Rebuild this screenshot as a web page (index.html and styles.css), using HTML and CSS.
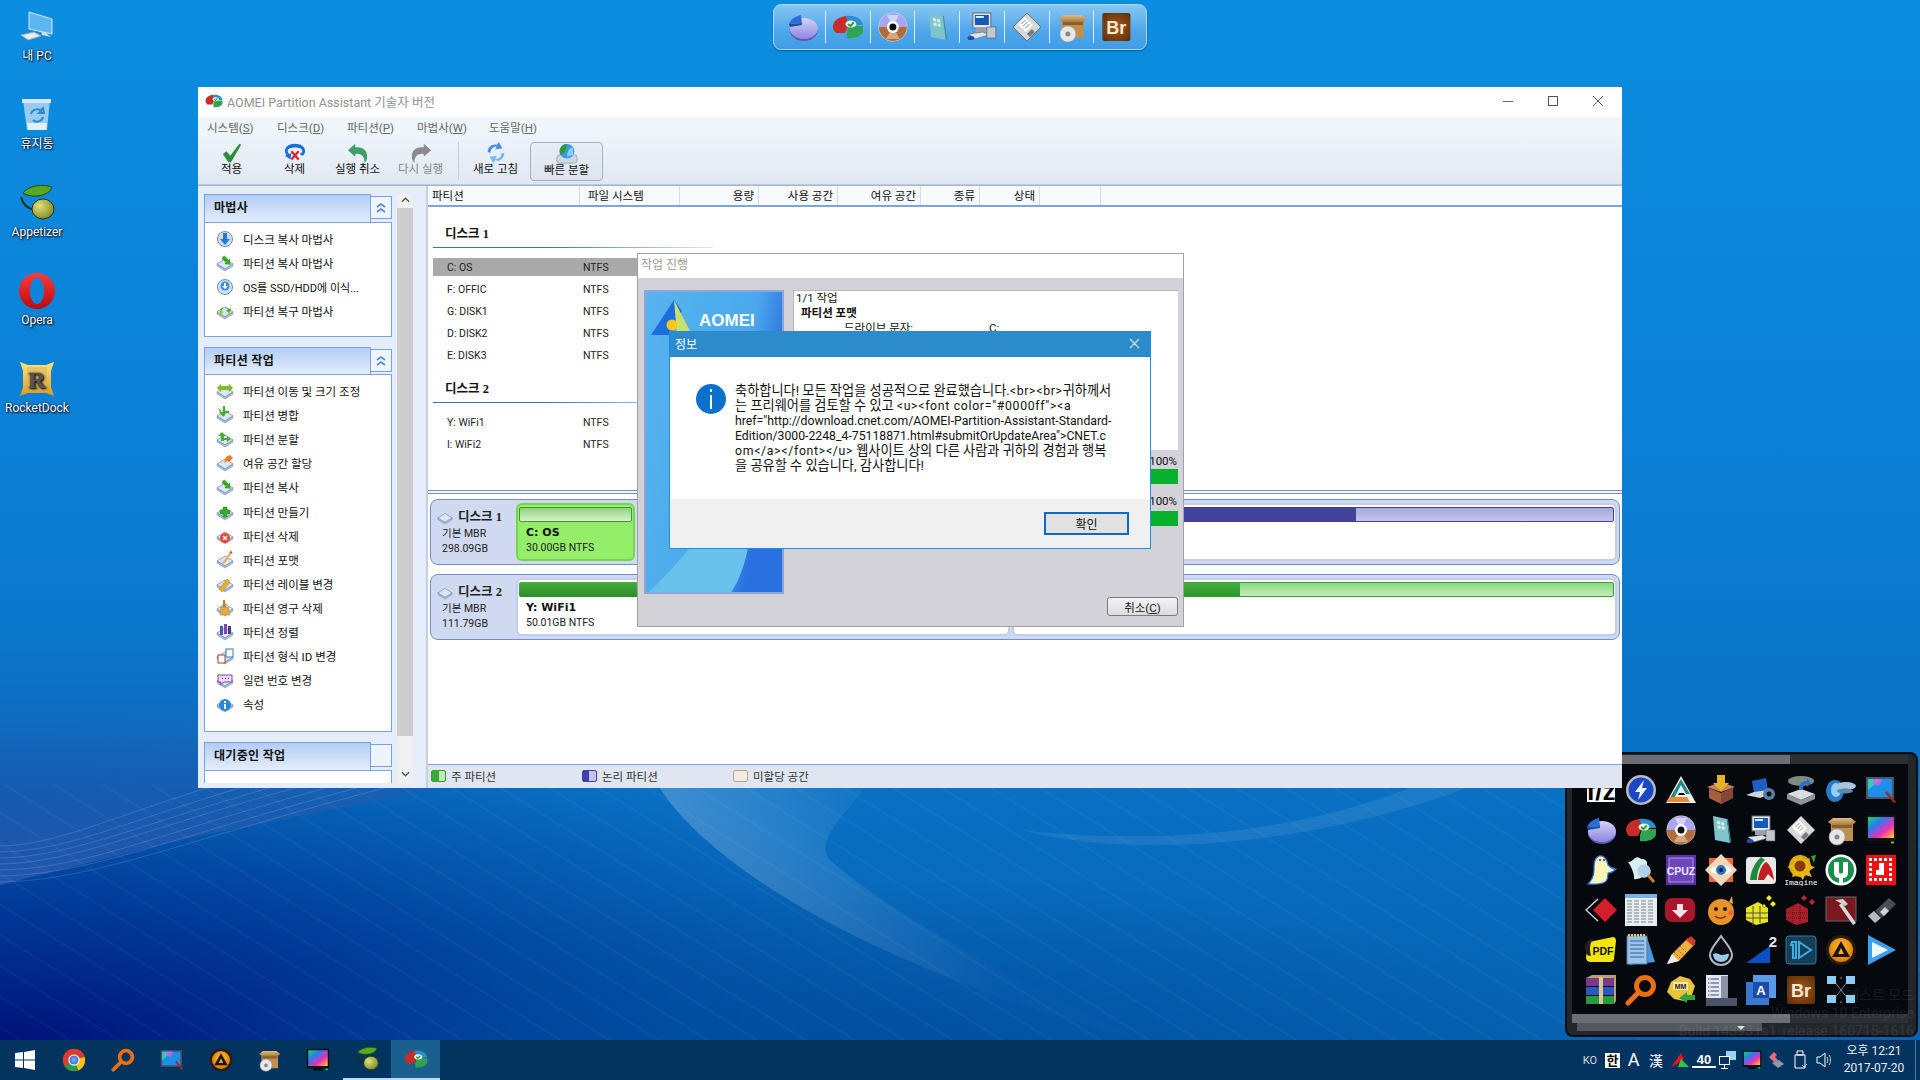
FILE: index.html
```html
<!DOCTYPE html>
<html lang="ko">
<head>
<meta charset="utf-8">
<title>AOMEI Partition Assistant</title>
<link rel="stylesheet" href="styles.css">
</head>
<body>
<svg class="sprites" width="0" height="0" aria-hidden="true">
<defs>
<linearGradient id="gPie" x1="0" y1="0" x2="0" y2="1"><stop offset="0" stop-color="#d6d3fa"/><stop offset="1" stop-color="#8a86e0"/></linearGradient>
<linearGradient id="gBoxT" x1="0" y1="0" x2="0" y2="1"><stop offset="0" stop-color="#e0bd84"/><stop offset="1" stop-color="#a97a3e"/></linearGradient>
<radialGradient id="gBr" cx=".5" cy=".5" r=".7"><stop offset="0" stop-color="#a5591a"/><stop offset="1" stop-color="#5b2d08"/></radialGradient>
<radialGradient id="gAimp" cx=".5" cy=".4" r=".6"><stop offset="0" stop-color="#ffc23a"/><stop offset="1" stop-color="#d97a00"/></radialGradient>
<linearGradient id="gMon" x1="0" y1="0" x2="1" y2="1"><stop offset="0" stop-color="#19d36b"/><stop offset=".33" stop-color="#2a7cf0"/><stop offset=".66" stop-color="#f02fb0"/><stop offset="1" stop-color="#ffd21c"/></linearGradient>
<radialGradient id="gOlive" cx=".35" cy=".35" r=".8"><stop offset="0" stop-color="#e0e07a"/><stop offset="1" stop-color="#75801c"/></radialGradient>
<linearGradient id="gOpera" x1="0" y1="0" x2="0" y2="1"><stop offset="0" stop-color="#ff3a3a"/><stop offset="1" stop-color="#b60b14"/></linearGradient>
<linearGradient id="gRd" x1="0" y1="0" x2="0" y2="1"><stop offset="0" stop-color="#ffe480"/><stop offset="1" stop-color="#d99a1e"/></linearGradient>
<radialGradient id="gChrome" cx=".5" cy=".5" r=".5"><stop offset="0" stop-color="#7db7f0"/><stop offset="1" stop-color="#2a74d0"/></radialGradient>

<symbol id="pie" viewBox="0 0 32 32"><ellipse cx="17" cy="19" rx="14" ry="11" fill="#5c58b5"/><ellipse cx="17" cy="17.500" rx="14" ry="10.500" fill="url(#gPie)"/><path d="M2 13C4 8 9 5 14 4l1 8z" fill="#2b6fd6"/><path d="M2 13l13-1v2L3 16z" fill="#1c4fa0"/></symbol>
<symbol id="pa" viewBox="0 0 32 32"><path d="M1 15C2 9 7 6 14 5l3 9-4 8H4C2 20 1 18 1 15z" fill="#c62c28"/><path d="M14 5c8-1 16 2 17 9H17z" fill="#2a8fd0"/><path d="M17 15h14v6c-2 5-9 7-16 6v-6z" fill="#2ea452"/><ellipse cx="19" cy="13" rx="5.500" ry="3.500" fill="#e9f7e4"/><path d="M16 13l2.500 2 3.500-3.500" fill="none" stroke="#2c9a30" stroke-width="1.800"/></symbol>
<symbol id="cd" viewBox="0 0 32 32"><circle cx="16" cy="16" r="14.500" fill="#ddd"/><path d="M2 16a14 14 0 0 1 28 0z" fill="#a8a6f0"/><path d="M2 16a14 14 0 0 0 28 0z" fill="#b06c3a"/><path d="M10 4l6 12 6-12z" fill="#e6e6ff" opacity=".7"/><path d="M9 28l7-12 7 12z" fill="#e6c0a0" opacity=".7"/><circle cx="16" cy="16" r="6" fill="#fff"/><circle cx="16" cy="16" r="3.500" fill="#0c1016"/></symbol>
<symbol id="book" viewBox="0 0 32 32"><path d="M8 2l14 3 3 24-15-3z" fill="#7ec4ca"/><path d="M22 5l3 24 1-1-3-23z" fill="#3e8a94"/><path d="M12 7l3 .6.3 3-3-.5zm4 .8l3 .6.3 3-3-.5zM12.500 11.500l3 .5.300 3-3-.5zm4 .8l3 .5.300 3-3-.5z" fill="#d6f0f2"/></symbol>
<symbol id="pcset" viewBox="0 0 32 32"><rect x="7" y="2" width="18" height="15" fill="#e4e8f0" stroke="#667"/><rect x="9" y="4" width="14" height="10" fill="#1a58b8"/><rect x="10" y="5" width="8" height="2" fill="#bfe"/><rect x="10" y="17" width="12" height="4" fill="#9aa0ac"/><path d="M3 23l14-2 6 3-14 4z" fill="#dfe2e8" stroke="#667" stroke-width=".6"/><rect x="21" y="16" width="9" height="11" fill="#c3c7d0" stroke="#556" stroke-width=".6"/><ellipse cx="5" cy="27" rx="3.500" ry="2" fill="#1b4fae"/></symbol>
<symbol id="floppy" viewBox="0 0 32 32"><path d="M16 2l14 14-14 14L2 16z" fill="#d8d8d8" stroke="#6e6e6e"/><path d="M14 6l8 8-7 7-8-8z" fill="#fff"/><path d="M10.500 13l4-4m-2 6l4-4m-2 6l4-4" stroke="#8a8a8a"/><path d="M21 18l3 3-5 5-3-3z" fill="#7a7a7a"/></symbol>
<symbol id="box" viewBox="0 0 32 32"><rect x="6" y="9" width="22" height="18" fill="#c08e4e"/><path d="M3 8l5-4h18l5 4-4 3H7z" fill="url(#gBoxT)"/><path d="M7 11h20v3H7z" fill="#8a5f2c"/><circle cx="12" cy="23" r="8" fill="#e7e7e7" stroke="#9a9a9a" stroke-width=".6"/><circle cx="12" cy="23" r="2.500" fill="#888"/></symbol>
<symbol id="br" viewBox="0 0 32 32"><rect x="2" y="2" width="28" height="28" rx="2" fill="url(#gBr)"/><text x="16" y="23" text-anchor="middle" font-family="Liberation Sans" font-weight="700" font-size="18" fill="#f4e8d8">Br</text></symbol>
<symbol id="fz" viewBox="0 0 32 32"><rect x="2" y="4" width="28" height="24" fill="#fff"/><text x="16" y="26" text-anchor="middle" font-family="Liberation Sans" font-weight="700" font-size="26" fill="#000">f/z</text></symbol>
<symbol id="bolt" viewBox="0 0 32 32"><circle cx="16" cy="16" r="15" fill="#b7bcc4"/><circle cx="16" cy="16" r="12.500" fill="#1c48c8"/><path d="M19 6l-9 12h5l-2 8 9-12h-5z" fill="#f2f6ff"/></symbol>
<symbol id="tri" viewBox="0 0 32 32"><path d="M16 2l15 27H1z" fill="#eee"/><path d="M16 5L5 24h4l7-13 5 9h4z" fill="#1d8a8a"/><path d="M2 28l3-5h17l3 5z" fill="#e98a30"/><path d="M14 19h5l1 2h-7z" fill="#05080d"/></symbol>
<symbol id="boxdl" viewBox="0 0 32 32"><path d="M2 13l14-5 14 5-14 5z" fill="#c8845a"/><path d="M4 14l12 5 12-5v10l-12 6-12-6z" fill="#a55f40"/><path d="M16 19v11l12-6V14z" fill="#824831"/><path d="M12 1h8v8h4l-8 8-8-8h4z" fill="#e6b422"/></symbol>
<symbol id="lapgear" viewBox="0 0 32 32"><path d="M7 7l14-3 2 12-14 3z" fill="#1f5fc4"/><path d="M1 21l8-3 14-2 5 3-13 5z" fill="#d0d4da"/><circle cx="24" cy="20" r="6" fill="#5d7ea6"/><circle cx="24" cy="20" r="2.500" fill="#05080d"/></symbol>
<symbol id="hddarrow" viewBox="0 0 32 32"><ellipse cx="16" cy="7" rx="13" ry="5" fill="#7d8c80"/><path d="M2 20l14-5 14 5-14 6z" fill="#d9dde2"/><path d="M2 20v5l14 6 14-6v-5l-14 6z" fill="#8d929b"/><path d="M14 16c0-6 2-9 8-9V4l4 5-4 4v-3c-3 0-4 2-4 6z" fill="#2a71c4"/></symbol>
<symbol id="wing" viewBox="0 0 32 32"><ellipse cx="10" cy="17" rx="9" ry="11" fill="#2a7ac8"/><ellipse cx="11" cy="16" rx="5" ry="7" fill="#8fd0f4"/><ellipse cx="21" cy="12" rx="10" ry="4" fill="#a8c4dc"/><ellipse cx="20" cy="17" rx="8" ry="2.500" fill="#5d87ad"/></symbol>
<symbol id="paint" viewBox="0 0 32 32"><rect x="1" y="3" width="28" height="22" fill="#4a5566"/><rect x="3" y="5" width="24" height="18" fill="#1c8fe8"/><path d="M3 5h13L3 16z" fill="#2ed0c0"/><path d="M8 5h10l-4 7-6-2z" fill="#d060e8" opacity=".8"/><path d="M22 17l9 11-2 1-9-10z" fill="#a52c20"/></symbol>
<symbol id="colormon" viewBox="0 0 32 32"><rect x="1" y="1" width="30" height="26" fill="#111"/><rect x="3" y="3" width="26" height="21" fill="url(#gMon)"/><rect x="10" y="27" width="12" height="3" fill="#0a0a0a"/><rect x="26" y="27.500" width="3" height="2" fill="#2fdc3e"/></symbol>
<symbol id="ghost" viewBox="0 0 32 32"><path d="M14 2c6-1 8 4 9 9 2 2 5 4 8 4-3 3-6 4-8 4 0 4-1 8-3 9-5 3-12 2-17 2 3-3 6-8 6-14S9 4 14 2z" fill="#fbf4b8" stroke="#2a6fe0" stroke-width="1.200"/><circle cx="15" cy="6" r="1" fill="#335"/><circle cx="19" cy="6" r="1" fill="#335"/></symbol>
<symbol id="ghostfind" viewBox="0 0 32 32"><path d="M3 8c3 0 5-2 7-4 3-2 5 1 7 1 2 0 5 1 5 4 0 3 1 8-1 11s-9 6-12 5c1-4-3-13-6-17z" fill="#d8f0f4"/><circle cx="19" cy="17" r="6" fill="#a8d4f0" stroke="#c9ccd6" stroke-width="1.600"/><path d="M23 21l6 7" stroke="#c28434" stroke-width="3"/></symbol>
<symbol id="cpuz" viewBox="0 0 32 32"><rect x="1" y="1" width="30" height="30" fill="#5a30a8"/><rect x="4" y="4" width="24" height="24" fill="#6e46bc" stroke="#a890dc"/><text x="16" y="21" text-anchor="middle" font-family="Liberation Sans" font-weight="700" font-size="10.500" fill="#e8e8f8">CPUZ</text></symbol>
<symbol id="eye" viewBox="0 0 32 32"><rect x="4" y="4" width="24" height="24" fill="#e8693e"/><path d="M16 0l16 16-16 16L0 16z" fill="#f0d8b8"/><path d="M5 16c4-6 18-6 22 0-4 6-18 6-22 0z" fill="#fff"/><circle cx="16" cy="16" r="5" fill="#2a70c0"/><circle cx="16" cy="16" r="2" fill="#0c1c40"/></symbol>
<symbol id="fsc" viewBox="0 0 32 32"><rect x="1" y="3" width="30" height="27" rx="4" fill="#e8e8e8"/><path d="M5 26C6 14 12 7 16 3l4 3c-5 4-8 12-8 20z" fill="#1f8a3c"/><path d="M13 26c1-8 4-16 8-18 4 2 7 9 8 18l-6-6-4 6z" fill="#c22020"/></symbol>
<symbol id="imagine" viewBox="0 0 32 32"><circle cx="15" cy="12" r="11" fill="#d8a810"/><path d="M15 0l3 7 7-3-2 7 7 2-6 4 3 6-7-2-2 5-4-5-7 2 2-7-7-3 7-3-1-7 6 3z" fill="#e8b810"/><circle cx="15" cy="12" r="5.500" fill="#8a3a10"/><path d="M26 2l5-1-2 8z" fill="#3aa030"/><text x="16" y="31" text-anchor="middle" font-family="Liberation Mono" font-size="8" fill="#fff">Imagine</text></symbol>
<symbol id="utor" viewBox="0 0 32 32"><circle cx="16" cy="16" r="15.500" fill="#fff"/><circle cx="16" cy="16" r="13" fill="#17904c"/><path d="M9 8h5v10c0 2 4 2 4 0V8h5v11c0 4-3 5-5 5v5h-4v-5c-3 0-5-2-5-5z" fill="#fff"/></symbol>
<symbol id="redgrid" viewBox="0 0 32 32"><rect x="1" y="1" width="30" height="30" fill="#f01010"/><path d="M4 4h3v3H4zm5 0h3v3H9zm5 0h3v3h-3zm5 0h3v3h-3zm5 0h3v3h-3zM4 9h3v3H4zm20 0h3v3h-3zM4 14h3v3H4zm10-5h5v12h-8v-5h3zm10 5h3v3h-3zM4 19h3v3H4zm20 0h3v3h-3zM4 24h3v3H4zm5 0h3v3H9zm5 0h3v3h-3zm5 0h3v3h-3zm5 0h3v3h-3z" fill="#fff"/></symbol>
<symbol id="diamond" viewBox="0 0 32 32"><path d="M13 5L1 16l12 11" fill="none" stroke="#ccc" stroke-width="1.500"/><path d="M20 4l12 12-12 12L8 16z" fill="#d21f2c"/></symbol>
<symbol id="sheet" viewBox="0 0 32 32"><rect width="32" height="32" fill="#e6eef2"/><rect width="32" height="4" fill="#7ab0e0"/><path d="M2 7h28M2 10h28M2 13h28M2 16h28M2 19h28M2 22h28M2 25h28M2 28h28" stroke="#6e7680" stroke-width=".9" stroke-dasharray="5 2"/></symbol>
<symbol id="reddl" viewBox="0 0 32 32"><rect y="4" width="30" height="24" rx="7" fill="#a8152c"/><path d="M12 10h6v6h5l-8 8-8-8h5z" fill="#f4e4e4"/></symbol>
<symbol id="face" viewBox="0 0 32 32"><circle cx="16" cy="18" r="13" fill="#e8932a"/><path d="M24 8l3-6 1 8z" fill="#e8b040"/><circle cx="11" cy="15" r="2" fill="#2a1808"/><circle cx="20" cy="15" r="2" fill="#2a1808"/><path d="M10 22c3 3 8 3 11 0" stroke="#7a3000" fill="none" stroke-width="1.500"/><circle cx="26" cy="19" r="2.500" fill="#f06040"/></symbol>
<symbol id="cubes" viewBox="0 0 32 32"><path d="M1 14l12-6 10 6v14l-12 3-10-5z" fill="#e8e420"/><path d="M1 19h22M1 24h22M8 12v19M15 12v17" stroke="#555" stroke-width="1"/><path d="M24 1l3 3-3 3-3-3zm4 6l3 3-3 3-3-3zm-9 3l2 2-2 2-2-2z" fill="#f4e818" stroke="#555" stroke-width=".5"/></symbol>
<symbol id="redcubes" viewBox="0 0 32 32"><path d="M1 15l12-6 10 6v13l-12 3-10-5z" fill="#a82028"/><path d="M1 19h22M1 24h22M8 12v19M15 12v17" stroke="#55101a" stroke-width="1" stroke-dasharray="1 1"/><path d="M19 1l3 3-3 3-3-3zm8 4l3 3-3 3-3-3z" fill="#b82830"/></symbol>
<symbol id="hammer" viewBox="0 0 32 32"><rect x="1" y="3" width="30" height="24" fill="#7a1820" stroke="#666"/><path d="M10 6l8-1 5 5-3 2-3-2z" fill="#d0d0d0"/><path d="M14 11l3-2 14 20-3 2z" fill="#d8d8d8"/></symbol>
<symbol id="usbk" viewBox="0 0 32 32"><path d="M10 17L24 4l7 6-14 14z" fill="#4a4e54"/><path d="M15 18l5-5 4 4-5 5z" fill="#d0d4d8"/><path d="M3 22l6-5 7 7-6 5z" fill="#b8bcc2"/></symbol>
<symbol id="pdf" viewBox="0 0 32 32"><path d="M4 8l24-5c2 0 3 2 3 4l-2 18c0 2-2 3-4 3l-20 0c-3 0-4-3-4-5z" fill="#f4e40a"/><path d="M0 14C0 8 4 5 9 4 5 8 4 14 6 22c-4 0-6-3-6-8z" fill="#222"/><text x="18" y="21" text-anchor="middle" font-family="Liberation Sans" font-weight="700" font-size="10.500" fill="#111">PDF</text></symbol>
<symbol id="note" viewBox="0 0 32 32"><path d="M3 3h19l8 25-26 3z" fill="#4a94e0"/><rect x="2" y="2" width="20" height="28" fill="#9cc4e8" stroke="#5577a8"/><path d="M5 7h14M5 11h14M5 15h14M5 19h14M5 23h14" stroke="#3a5a9a"/><path d="M3 1h18" stroke="#e8d060" stroke-width="3" stroke-dasharray="2 1"/></symbol>
<symbol id="pencil" viewBox="0 0 32 32"><path d="M2 30l5-10L23 4l7 6-16 17z" fill="#f0b040"/><path d="M7 20l7 7-12 3z" fill="#eee"/><path d="M21 6l7 6 3-5-5-5z" fill="#d03a30"/><path d="M9 18l7 7M12 15l7 7M15 12l7 7" stroke="#a06c20" stroke-dasharray="2 1.500"/></symbol>
<symbol id="drop" viewBox="0 0 32 32"><path d="M16 2c6 9 11 13 11 19a11 10 0 0 1-22 0c0-6 5-10 11-19z" fill="#0a0e14" stroke="#b0b8bc" stroke-width="2"/><path d="M8 20c4-2 6 1 9 1s5-2 7-1c0 5-4 8-8 8s-8-3-8-8z" fill="#9cc8ec"/></symbol>
<symbol id="wedge" viewBox="0 0 32 32"><path d="M1 29L25 12v17z" fill="#0a50c0"/><text x="28" y="13" text-anchor="middle" font-family="Liberation Sans" font-weight="700" font-size="15" fill="#e8e8e8">2</text></symbol>
<symbol id="oned" viewBox="0 0 32 32"><rect x="1" y="2" width="30" height="28" rx="3" fill="#163c58" stroke="#2a7ca8"/><path d="M7 8h4v16H8V11H6zM14 8l12 8-12 8z" fill="none" stroke="#3ab0e0" stroke-width="2"/></symbol>
<symbol id="aimp" viewBox="0 0 32 32"><circle cx="16" cy="16" r="15" fill="#2a1c08"/><circle cx="16" cy="16" r="12" fill="url(#gAimp)"/><path d="M16 7l9 16H7zm0 7l-3 6h6z" fill="#1c1408" fill-rule="evenodd"/></symbol>
<symbol id="play" viewBox="0 0 32 32"><path d="M3 1l28 15L3 31z" fill="#3ca0f0"/><path d="M7 8l16 8-16 8z" fill="#eef6ff"/></symbol>
<symbol id="rar" viewBox="0 0 32 32"><rect x="1" y="4" width="28" height="8" fill="#7a3a8c"/><rect x="1" y="13" width="28" height="8" fill="#2a58c0"/><rect x="1" y="22" width="28" height="8" fill="#2a9a40"/><path d="M1 4l6-3h24l-2 3zM29 4l2-3v26l-2 3z" fill="#b8a070"/><rect x="14" y="3" width="4" height="27" fill="#d8c890"/></symbol>
<symbol id="search" viewBox="0 0 32 32"><circle cx="20" cy="12" r="8.500" fill="none" stroke="#e96f10" stroke-width="5"/><path d="M13 19L3 29" stroke="#e96f10" stroke-width="5" stroke-linecap="round"/></symbol>
<symbol id="mm" viewBox="0 0 32 32"><path d="M6 8l9-6 10 3 5 7-3 9-8 6-10-2-7-7z" fill="#e8c43c"/><rect x="8" y="8" width="15" height="8" fill="#f8e8a0"/><text x="15.500" y="15" text-anchor="middle" font-family="Liberation Sans" font-weight="700" font-size="7" fill="#222">MM</text><path d="M14 24l8-6v3h8v5h-8v3z" fill="#2ea440"/></symbol>
<symbol id="doclist" viewBox="0 0 32 32"><rect x="1" y="1" width="22" height="26" fill="#e4e8f0"/><rect x="16" y="2" width="7" height="25" fill="#8a92a4"/><path d="M3 5h11M3 9h11M3 13h11M3 17h11M3 21h11" stroke="#3a4a70" stroke-dasharray="1.500 1 8 0"/><rect x="1" y="24" width="31" height="8" fill="#4c5468"/></symbol>
<symbol id="ablue" viewBox="0 0 32 32"><rect x="1" y="8" width="23" height="23" fill="#3a78d0"/><rect x="8" y="1" width="23" height="23" fill="#5a98e8"/><rect x="8" y="8" width="16" height="16" fill="#1c4ca8"/><text x="16" y="21" text-anchor="middle" font-family="Liberation Sans" font-weight="700" font-size="13" fill="#fff">A</text></symbol>
<symbol id="netsq" viewBox="0 0 32 32"><path d="M9 7l14 18M23 7L9 25M16 3v2M16 27v2" stroke="#9ab" stroke-width=".8"/><path d="M2 2h9v8H2zm19 0h9v8h-9zM2 21h9v8H2zm19 0h9v8h-9z" fill="#8ccdf6"/></symbol>

<symbol id="monitor" viewBox="0 0 36 36"><path d="M10 3l23 7v15L10 20z" fill="#5cb6f0" stroke="#dfe6ec"/><path d="M22 22l5 2 5 4-9-2z" fill="#d8dde2"/><path d="M2 26l13-3 7 4-13 4z" fill="#e8ecf0" stroke="#9aa"/></symbol>
<symbol id="bin" viewBox="0 0 36 36"><path d="M4 3l27-1-3 31H8z" fill="#9fd0f0" opacity=".95"/><path d="M3 2l29 0 0 4-29 0z" fill="#d6e9f6"/><path d="M8 26h20l-1 7H9z" fill="#e4eef5"/><path d="M12 17a6 6 0 0 1 10-3l-2 2 5 0-1-5-2 2M24 20a6 6 0 0 1-10 3" fill="none" stroke="#2a88d0" stroke-width="2"/></symbol>
<symbol id="olive" viewBox="0 0 36 36"><path d="M4 8C10 0 24-1 33 2 30 11 14 14 4 8z" fill="#5aa81e" stroke="#1f4a10"/><path d="M2 12c2 8 8 12 14 13" fill="none" stroke="#24300c" stroke-width="2"/><ellipse cx="24" cy="24" rx="11" ry="10" fill="url(#gOlive)" stroke="#2a300c"/></symbol>
<symbol id="opera" viewBox="0 0 36 36"><path d="M18 0c10 0 18 8 18 18s-8 18-18 18S0 28 0 18 8 0 18 0zm0 5c-4 0-7 6-7 13s3 13 7 13 7-6 7-13-3-13-7-13z" fill="url(#gOpera)" fill-rule="evenodd"/></symbol>
<symbol id="rocket" viewBox="0 0 36 36"><path d="M1 1l8 3h18l8-3-3 9v16l3 9-8-3H9l-8 3 3-9V10z" fill="url(#gRd)"/><rect x="8" y="6" width="20" height="24" fill="#c8ab5c" opacity=".4"/><text x="18" y="27" text-anchor="middle" font-family="Liberation Serif" font-weight="700" font-size="24" fill="#555">R</text></symbol>
<symbol id="chrome" viewBox="0 0 32 32"><circle cx="16" cy="16" r="15" fill="#df3a30"/><path d="M3 24l13-8 13 6a15 15 0 0 1-13 9c-6 0-10-3-13-7z" fill="#2b9a48"/><path d="M16 16l14-4a15 15 0 0 1-8 18z" fill="#fbc512"/><circle cx="16" cy="16" r="7.500" fill="#fff"/><circle cx="16" cy="16" r="6" fill="url(#gChrome)"/></symbol>

<symbol id="hd" viewBox="0 0 18 18"><path d="M1 10l8-5 8 5-8 5z" fill="#dce6f5" stroke="#7690b4" stroke-width=".8"/><path d="M1 10v2l8 5 8-5v-2l-8 5z" fill="#a9b9d2" stroke="#7690b4" stroke-width=".5"/></symbol>
<symbol id="i-diskcopy" viewBox="0 0 18 18"><circle cx="9" cy="9" r="7.500" fill="#cfe0f4" stroke="#6f8cb4"/><path d="M7 3h4v6h3l-5 6-5-6h3z" fill="#2a78d4"/></symbol>
<symbol id="i-copy" viewBox="0 0 18 18"><use href="#hd"/><path d="M6 3h6v-2l5 4-5 4V7H6z" fill="#39a62a" transform="rotate(45 9 5)"/></symbol>
<symbol id="i-os" viewBox="0 0 18 18"><circle cx="9" cy="9" r="7.500" fill="#cfe0f4" stroke="#6f8cb4"/><circle cx="9" cy="8" r="4.500" fill="#3d8ae0"/><path d="M8 5h2v3h2l-3 3-3-3h2z" fill="#fff"/></symbol>
<symbol id="i-rec" viewBox="0 0 18 18"><use href="#hd"/><path d="M4 9a5 4 0 0 1 9-2l2-1-1 5-4-2 2-1a3 3 0 0 0-6 1z" fill="#3fa82e"/><path d="M14 9a5 4 0 0 1-9 3l-2 1 1-5 4 2-2 1a3 3 0 0 0 6-1z" fill="#a0d030"/></symbol>
<symbol id="i-move" viewBox="0 0 18 18"><use href="#hd"/><path d="M1 6l4-4v2h8V2l4 4-4 4V8H5v2z" fill="#6bbf3a" stroke="#d8c020" stroke-width=".5"/></symbol>
<symbol id="i-merge" viewBox="0 0 18 18"><use href="#hd"/><path d="M7 0h2v5h4v2H9v3l-3-3 1-2zM2 2l4 3-2 1z" fill="#49ab30"/><path d="M7 11l-4-5h8z" fill="#49ab30"/></symbol>
<symbol id="i-split" viewBox="0 0 18 18"><use href="#hd"/><path d="M6 2l4 4H8v5H5V6H2z" fill="#49ab30"/><path d="M8 8h3V6l4 3-4 3v-2H8z" fill="#49ab30"/></symbol>
<symbol id="i-alloc" viewBox="0 0 18 18"><use href="#hd"/><path d="M10 3l4-2 3 3-4 4-2-1-3 2z" fill="#f07a20"/></symbol>
<symbol id="i-create" viewBox="0 0 18 18"><use href="#hd"/><path d="M7 4h4v3h3v4h-3v3H7v-3H4V7h3z" fill="#3ca82c" stroke="#2a7a20" stroke-width=".4"/></symbol>
<symbol id="i-del" viewBox="0 0 18 18"><use href="#hd"/><circle cx="9" cy="11" r="5" fill="#e84a30"/><path d="M7 9l4 4m0-4l-4 4" stroke="#fff" stroke-width="1.400"/></symbol>
<symbol id="i-fmt" viewBox="0 0 18 18"><use href="#hd"/><path d="M7 11l7-10 2 1-7 10-3 1z" fill="#e6b060"/><path d="M13.500 1.500l2.500 1 .5-1.500-2-1z" fill="#d03a30"/></symbol>
<symbol id="i-label" viewBox="0 0 18 18"><use href="#hd"/><path d="M3 14L11 4l3 3-8 10z" fill="#e8b028" stroke="#a07810" stroke-width=".5"/></symbol>
<symbol id="i-wipe" viewBox="0 0 18 18"><use href="#hd"/><path d="M7 1h2l1 7H7z" fill="#c0802c"/><path d="M5 8h7l2 8H4z" fill="#e8a840" stroke="#a06c18" stroke-width=".4"/></symbol>
<symbol id="i-align" viewBox="0 0 18 18"><use href="#hd"/><path d="M4 3h3v9H4z" fill="#4a58b0"/><path d="M8 1h3v10H8z" fill="#7a4ab0"/><path d="M12 3h3v8h-3z" fill="#4a3a90"/></symbol>
<symbol id="i-type" viewBox="0 0 18 18"><use href="#hd"/><rect x="2" y="8" width="7" height="8" fill="#fff" stroke="#a84020"/><rect x="10" y="2" width="7" height="8" fill="#fff" stroke="#2a78d0"/></symbol>
<symbol id="i-serial" viewBox="0 0 18 18"><use href="#hd"/><path d="M2 4h14v7H8l-4 3 1-3H2z" fill="#e8d8f4" stroke="#7a4ab0"/><path d="M6 7.500h1m2 0h1m2 0h1" stroke="#555"/></symbol>
<symbol id="i-info" viewBox="0 0 18 18"><use href="#hd"/><circle cx="9" cy="10" r="6" fill="#2a88dc"/><rect x="8" y="9" width="2" height="5" fill="#fff"/><rect x="8" y="6" width="2" height="2" fill="#fff"/></symbol>

<symbol id="t-apply" viewBox="0 0 24 24"><path d="M2 13l4-3 4 5L20 2l2 1-11 19H8z" fill="#2f8f3e"/></symbol>
<symbol id="t-del" viewBox="0 0 24 24"><path d="M1 10c0-5 5-8 11-8s11 3 11 8c0 2-1 4-3 5l-3-2c2-1 3-2 3-3 0-3-4-4-8-4s-8 1-8 4c0 1 1 2 2 3l2-1-1 7-6-4 2-1c-1-1-2-2-2-4z" fill="#1c6ce0"/><path d="M8 10l8 9m0-9l-8 9" stroke="#e02020" stroke-width="2.400"/></symbol>
<symbol id="t-undo" viewBox="0 0 24 24"><path d="M1 9l8-7v4c8-1 13 3 13 10 0 3-1 5-3 7 1-6-3-11-10-10v3z" fill="#3fa067"/></symbol>
<symbol id="t-redo" viewBox="0 0 24 24"><path d="M23 9l-8-7v4C7 5 2 9 2 16c0 3 1 5 3 7-1-6 3-11 10-10v3z" fill="#8a8a8a"/></symbol>
<symbol id="t-ref" viewBox="0 0 24 24"><path d="M3 11C3 5 8 2 13 3l2-3 4 7-8 1 2-3c-3 0-7 2-7 7z" fill="#4a8fe0"/><path d="M21 12c0 6-5 10-10 8l-2 3-4-7 8-1-2 3c4 1 7-2 7-6z" fill="#7fb4ec"/></symbol>
<symbol id="t-quick" viewBox="0 0 24 24"><rect x="1" y="13" width="22" height="9" rx="3" fill="#d0d8e4" stroke="#98a4b8"/><circle cx="12" cy="9" r="8" fill="#3a9ae8"/><path d="M12 1a8 8 0 0 0-7 12c4-1 6-5 7-12z" fill="#2e9a3a"/><path d="M18 4l1 9-7 2c0-5 2-9 6-11z" fill="#8ad0f0"/></symbol>
<symbol id="chev" viewBox="0 0 12 12"><path d="M2 5l4-3 4 3M2 10l4-3 4 3" fill="none" stroke="#5588cc" stroke-width="1.600"/></symbol>
</defs>
</svg>

<main class="desktop">
<svg class="wallpaper" viewBox="0 0 1920 1080" preserveAspectRatio="none" aria-hidden="true">
<defs>
<linearGradient id="wpBase" x1="0" y1="0" x2="0" y2="1"><stop offset="0" stop-color="#0c8ee0"/><stop offset=".4" stop-color="#0b80d6"/><stop offset=".7" stop-color="#0a72c6"/><stop offset="1" stop-color="#0560ae"/></linearGradient>
<radialGradient id="wpDark" gradientUnits="userSpaceOnUse" cx="0" cy="1050" r="1000" gradientTransform="matrix(1 0 0 .34 0 693)"><stop offset="0" stop-color="#000f78"/><stop offset=".5" stop-color="#003a98" stop-opacity=".85"/><stop offset="1" stop-color="#004a9e" stop-opacity="0"/></radialGradient>
<radialGradient id="wpMid" gradientUnits="userSpaceOnUse" cx="900" cy="1060" r="700" gradientTransform="matrix(1 0 0 .26 0 784)"><stop offset="0" stop-color="#004a9c" stop-opacity=".8"/><stop offset="1" stop-color="#004a9c" stop-opacity="0"/></radialGradient>
<linearGradient id="wpSheet" gradientUnits="userSpaceOnUse" x1="680" y1="880" x2="880" y2="770"><stop offset="0" stop-color="#fff" stop-opacity=".24"/><stop offset="1" stop-color="#fff" stop-opacity=".01"/></linearGradient>
<linearGradient id="wpTop" x1="0" y1="0" x2="0" y2="1"><stop offset="0" stop-color="#1f55aa" stop-opacity="0"/><stop offset="1" stop-color="#2a5eb2" stop-opacity=".8"/></linearGradient>
<pattern id="wpLines" width="26" height="26" patternUnits="userSpaceOnUse" patternTransform="rotate(32)"><path d="M0 13h26" stroke="#fff" stroke-width="1"/></pattern>
</defs>
<rect width="1920" height="1080" fill="url(#wpBase)"/>
<rect width="1920" height="1080" fill="url(#wpDark)"/>
<rect width="1920" height="1080" fill="url(#wpMid)"/>
<path d="M0 640h440v148L180 840 0 885z" fill="url(#wpTop)"/>
<rect y="785" width="1920" height="255" fill="url(#wpLines)" opacity=".06"/>
<path d="M655 780C700 860 860 965 1140 1040 1000 975 880 905 830 860 810 840 860 800 870 780z" fill="url(#wpSheet)"/>
<path d="M1020 830C1180 870 1390 825 1510 770h-60C1350 820 1200 850 1020 830z" fill="#fff" opacity=".08"/>
<g fill="none" stroke="#fff" opacity=".14"><path d="M0 882C100 880 180 840 430 776"/><path d="M0 876C100 874 180 832 425 770"/><path d="M0 870C100 868 170 825 415 765"/><path d="M0 864C90 862 160 818 405 760"/><path d="M0 858C90 856 160 811 395 755"/><path d="M0 852C90 850 150 804 385 750"/><path d="M0 846C80 844 140 796 370 745"/></g>
</svg>

<aside class="icons">
<div class="dicon"><svg class="dicon-img"><use href="#monitor"/></svg><span>내 PC</span></div>
<div class="dicon"><svg class="dicon-img"><use href="#bin"/></svg><span>휴지통</span></div>
<div class="dicon"><svg class="dicon-img"><use href="#olive"/></svg><span>Appetizer</span></div>
<div class="dicon"><svg class="dicon-img"><use href="#opera"/></svg><span>Opera</span></div>
<div class="dicon"><svg class="dicon-img"><use href="#rocket"/></svg><span>RocketDock</span></div>
</aside>

<nav class="topdock">
<svg class="td-i"><use href="#pie"/></svg><svg class="td-i"><use href="#pa"/></svg><svg class="td-i"><use href="#cd"/></svg><svg class="td-i"><use href="#book"/></svg><svg class="td-i"><use href="#pcset"/></svg><svg class="td-i"><use href="#floppy"/></svg><svg class="td-i"><use href="#box"/></svg><svg class="td-i td-last"><use href="#br"/></svg>
</nav>

<div class="watermark"><p>테스트 모드</p><p>Windows 10 Enterprise</p><p>Build 14393.rs1_release.160715-1616</p></div>

<section class="dock">
<div class="dock-inner">
<div class="dock-band"></div>
<div class="dock-black">
<div class="dock-grid">
<svg><use href="#fz"/></svg><svg><use href="#bolt"/></svg><svg><use href="#tri"/></svg><svg><use href="#boxdl"/></svg><svg><use href="#lapgear"/></svg><svg><use href="#hddarrow"/></svg><svg><use href="#wing"/></svg><svg><use href="#paint"/></svg>
<svg><use href="#pie"/></svg><svg><use href="#pa"/></svg><svg><use href="#cd"/></svg><svg><use href="#book"/></svg><svg><use href="#pcset"/></svg><svg><use href="#floppy"/></svg><svg><use href="#box"/></svg><svg><use href="#colormon"/></svg>
<svg><use href="#ghost"/></svg><svg><use href="#ghostfind"/></svg><svg><use href="#cpuz"/></svg><svg><use href="#eye"/></svg><svg><use href="#fsc"/></svg><svg><use href="#imagine"/></svg><svg><use href="#utor"/></svg><svg><use href="#redgrid"/></svg>
<svg><use href="#diamond"/></svg><svg><use href="#sheet"/></svg><svg><use href="#reddl"/></svg><svg><use href="#face"/></svg><svg><use href="#cubes"/></svg><svg><use href="#redcubes"/></svg><svg><use href="#hammer"/></svg><svg><use href="#usbk"/></svg>
<svg><use href="#pdf"/></svg><svg><use href="#note"/></svg><svg><use href="#pencil"/></svg><svg><use href="#drop"/></svg><svg><use href="#wedge"/></svg><svg><use href="#oned"/></svg><svg><use href="#aimp"/></svg><svg><use href="#play"/></svg>
<svg><use href="#rar"/></svg><svg><use href="#search"/></svg><svg><use href="#mm"/></svg><svg><use href="#doclist"/></svg><svg><use href="#ablue"/></svg><svg><use href="#br"/></svg><svg><use href="#netsq"/></svg>
</div>
</div>
<div class="dock-band"></div>
<div class="dock-tab"><i class="dock-tri"></i></div>
</div>
</section>

<section class="appwin">
<header class="titlebar">
<svg class="app-ico"><use href="#pa"/></svg>
<span class="app-title">AOMEI Partition Assistant 기술자 버전</span>
<div class="winctl">
<svg viewBox="0 0 12 12"><path d="M1 6.500h10" stroke="#666"/></svg>
<svg viewBox="0 0 12 12"><rect x="1.500" y="1.500" width="9" height="9" fill="none" stroke="#555"/></svg>
<svg viewBox="0 0 12 12"><path d="M1 1l10 10M11 1L1 11" stroke="#555"/></svg>
</div>
</header>
<div class="menubar"><span>시스템(<u>S</u>)</span><span>디스크(<u>D</u>)</span><span>파티션(<u>P</u>)</span><span class="m-wide">마법사(<u>W</u>)</span><span>도움말(<u>H</u>)</span></div>
<div class="toolbar">
<div class="tool"><svg><use href="#t-apply"/></svg><span>적용</span></div>
<div class="tool"><svg><use href="#t-del"/></svg><span>삭제</span></div>
<div class="tool"><svg><use href="#t-undo"/></svg><span>실행 취소</span></div>
<div class="tool tool-off"><svg><use href="#t-redo"/></svg><span>다시 실행</span></div>
<i class="tool-sep"></i>
<div class="tool"><svg><use href="#t-ref"/></svg><span>새로 고침</span></div>
<div class="tool tool-on"><svg><use href="#t-quick"/></svg><span>빠른 분할</span></div>
</div>
<div class="work">
<div class="leftcol">
<div class="panes">
<section class="pane">
<div class="pane-head"><h3>마법사</h3><div class="pane-tog"><svg><use href="#chev"/></svg></div></div>
<ul class="pane-body b1">
<li><svg><use href="#i-diskcopy"/></svg>디스크 복사 마법사</li>
<li><svg><use href="#i-copy"/></svg>파티션 복사 마법사</li>
<li><svg><use href="#i-os"/></svg><span class="tight">OS를 SSD/HDD에 이식...</span></li>
<li><svg><use href="#i-rec"/></svg>파티션 복구 마법사</li>
</ul>
</section>
<section class="pane">
<div class="pane-head"><h3>파티션 작업</h3><div class="pane-tog"><svg><use href="#chev"/></svg></div></div>
<ul class="pane-body b2">
<li><svg><use href="#i-move"/></svg>파티션 이동 및 크기 조정</li>
<li><svg><use href="#i-merge"/></svg>파티션 병합</li>
<li><svg><use href="#i-split"/></svg>파티션 분할</li>
<li><svg><use href="#i-alloc"/></svg>여유 공간 할당</li>
<li><svg><use href="#i-copy"/></svg>파티션 복사</li>
<li><svg><use href="#i-create"/></svg>파티션 만들기</li>
<li><svg><use href="#i-del"/></svg>파티션 삭제</li>
<li><svg><use href="#i-fmt"/></svg>파티션 포맷</li>
<li><svg><use href="#i-label"/></svg>파티션 레이블 변경</li>
<li><svg><use href="#i-wipe"/></svg>파티션 영구 삭제</li>
<li><svg><use href="#i-align"/></svg>파티션 정렬</li>
<li><svg><use href="#i-type"/></svg>파티션 형식 ID 변경</li>
<li><svg><use href="#i-serial"/></svg>일련 번호 변경</li>
<li><svg><use href="#i-info"/></svg>속성</li>
</ul>
</section>
<section class="pane">
<div class="pane-head"><h3>대기중인 작업</h3><div class="pane-tog"></div></div>
<div class="pane-body b3"><p>포맷 (C:) 파티션</p></div>
</section>
</div>
<div class="scroll"><svg viewBox="0 0 10 6"><path d="M1 5l4-4 4 4" fill="none" stroke="#555" stroke-width="1.500"/></svg><i class="thumb"></i><svg viewBox="0 0 10 6"><path d="M1 1l4 4 4-4" fill="none" stroke="#555" stroke-width="1.500"/></svg></div>
</div>
<div class="rightcol">
<div class="listhead">
<span class="c1">파티션</span><span class="c2">파일 시스템</span><span class="c3">용량</span><span class="c4">사용 공간</span><span class="c5">여유 공간</span><span class="c6">종류</span><span class="c7">상태</span><span class="c8"></span>
</div>
<div class="list">
<h4>디스크 1</h4><hr>
<div class="row row-sel"><span>C: OS</span><span>NTFS</span></div>
<div class="row"><span>F: OFFIC</span><span>NTFS</span></div>
<div class="row"><span>G: DISK1</span><span>NTFS</span></div>
<div class="row"><span>D: DISK2</span><span>NTFS</span></div>
<div class="row"><span>E: DISK3</span><span>NTFS</span></div>
<h4 class="h-2">디스크 2</h4><hr>
<div class="row"><span>Y: WiFi1</span><span>NTFS</span></div>
<div class="row"><span>I: WiFi2</span><span>NTFS</span></div>
</div>
<div class="split"></div>
<div class="disks">
<div class="card">
<div class="card-label"><div class="dname"><svg><use href="#hd"/></svg><b>디스크 1</b></div><p>기본 MBR</p><p>298.09GB</p></div>
<div class="part part-c"><div class="bar bar-lg"></div><b>C: OS</b><p>30.00GB NTFS</p></div>
<div class="part part-e"><div class="bar bar-bl"><i></i></div></div>
</div>
<div class="card">
<div class="card-label"><div class="dname"><svg><use href="#hd"/></svg><b>디스크 2</b></div><p>기본 MBR</p><p>111.79GB</p></div>
<div class="part part-y"><div class="bar bar-dg"></div><b>Y: WiFi1</b><p>50.01GB NTFS</p></div>
<div class="part part-i"><div class="bar bar-gr"><i></i></div></div>
</div>
</div>
<footer class="status">
<span class="leg l1"><i class="sw sw-g"></i>주 파티션</span>
<span class="leg l2"><i class="sw sw-b"></i>논리 파티션</span>
<span class="leg"><i class="sw sw-n"></i>미할당 공간</span>
</footer>
</div>
</div>
</section>

<section class="progress">
<header class="pr-title">작업 진행</header>
<div class="pr-body">
<div class="banner">
<svg class="ban-bg" viewBox="0 0 140 304" preserveAspectRatio="none"><path d="M3 304C30 280 60 240 108 190 112 240 104 280 88 304z" fill="#68c2ec"/></svg>
<svg class="ban-logo" viewBox="0 0 41 35"><path d="M0 35L23 0l8 11-11 24z" fill="#1c6ee0"/><path d="M23 0l18 35H26z" fill="#c8e070"/><circle cx="21" cy="25" r="5.500" fill="#f8c818"/></svg>
<b class="ban-text">AOMEI</b>
</div>
<div class="pr-right">
<div class="log"><p>1/1 작업</p><p class="log-h">파티션 포맷</p><p class="log-k"><span>드라이브 문자:</span><span>C:</span></p></div>
<p class="pct pct-1">100%</p><div class="pbar"></div>
<p class="pct pct-2">100%</p><div class="pbar pbar-2"></div>
<button class="btn-cancel" type="button">취소(<u>C</u>)</button>
</div>
</div>
</section>

<section class="dialog">
<header class="dlg-title"><span>정보</span><svg viewBox="0 0 12 12"><path d="M1 1l10 10M11 1L1 11" stroke="#fff" stroke-width="1.200"/></svg></header>
<div class="dlg-body">
<svg class="dlg-ico" viewBox="0 0 30 30"><circle cx="15" cy="15" r="15" fill="#0a72cc"/><rect x="14" y="5" width="2" height="3" fill="#fff"/><rect x="14" y="11" width="2" height="14" fill="#fff"/></svg>
<p class="dlg-text"><span class="kr">축하합니다! 모든 작업을 성공적으로 완료했습니다.</span><span class="wide">&lt;br&gt;&lt;br&gt;</span><span class="kr">귀하께서</span><br><span class="kr">는 프리웨어를 검토할 수 있고</span> <span class="wide">&lt;u&gt;&lt;font color="#0000ff"&gt;&lt;a</span><br>href="http://download.cnet.com/AOMEI-Partition-Assistant-Standard-<br>Edition/3000-2248_4-75118871.html#submitOrUpdateArea"&gt;CNET.c<br><span class="wide">om&lt;/a&gt;&lt;/font&gt;&lt;/u&gt;</span> <span class="kr">웹사이트 상의 다른 사람과 귀하의 경험과 행복</span><br><span class="kr">을 공유할 수 있습니다, 감사합니다!</span></p>
</div>
<footer class="dlg-foot"><button class="btn-ok" type="button">확인</button></footer>
</section>

<footer class="taskbar">
<div class="tb-left">
<div class="tb-i"><svg viewBox="0 0 20 20"><path d="M0 3l8-1v7.500H0zM9 2l11-2v9.500H9zM0 10.500h8V18l-8-1zM9 10.500h11V20L9 18z" fill="#fff"/></svg></div>
<div class="tb-i"><svg><use href="#chrome"/></svg></div>
<div class="tb-i"><svg><use href="#search"/></svg></div>
<div class="tb-i"><svg><use href="#paint"/></svg></div>
<div class="tb-i"><svg><use href="#aimp"/></svg></div>
<div class="tb-i"><svg><use href="#box"/></svg></div>
<div class="tb-i"><svg><use href="#colormon"/></svg></div>
<div class="tb-i tb-run"><svg><use href="#olive"/></svg></div>
<div class="tb-i tb-act"><svg><use href="#pa"/></svg></div>
</div>
<div class="tray">
<span class="t-ko">KO</span><span class="t-han">한</span><span class="t-a">A</span><span class="t-hj">漢</span>
<svg class="t-ic" viewBox="0 0 20 20"><path d="M1 17L11 3l3 6-7 5z" fill="#e8141c"/><path d="M11 9l8 8H8z" fill="#2ec83c"/></svg>
<span class="t-40">40</span>
<svg class="t-ic" viewBox="0 0 20 20"><rect x="8" y="1" width="10" height="9" fill="#9fd2f2"/><rect x="1.500" y="6.500" width="10" height="8" fill="#03345f" stroke="#fff"/><path d="M6.500 15v3M3 18.500h7" stroke="#fff"/></svg>
<svg class="t-ic"><use href="#colormon"/></svg>
<svg class="t-ic" viewBox="0 0 20 20"><path d="M3 7l5-5 3 3-2 2 3 3-3 3z" fill="#e06a80"/><path d="M6 13l7-3 5 4-6 4z" fill="#8a98a8"/></svg>
<svg class="t-ic" viewBox="0 0 20 20"><path d="M7 1h6v4H7zM5 5h10v13H5z" fill="none" stroke="#fff"/><path d="M12 15l2 2 3-3" fill="none" stroke="#cfd8e0"/></svg>
<svg class="t-ic" viewBox="0 0 20 20"><path d="M3 7h3l5-4v14l-5-4H3z" fill="none" stroke="#fff"/><path d="M13 7c1 2 1 4 0 6M15 5c2 3 2 7 0 10" fill="none" stroke="#cfd8e0"/></svg>
<div class="clock"><span>오후 12:21</span><span>2017-07-20</span></div>
<i class="showdesk"></i>
</div>
</footer>
</main>
</body>
</html>
```
FILE: styles.css
```css
* { box-sizing: border-box; margin: 0; padding: 0; }
html, body { width: 1920px; height: 1080px; overflow: hidden; }
body { font-family: Roboto, "Noto Sans CJK KR", sans-serif; font-size: 12px; color: #111; }
.sprites { position: absolute; }
u { text-decoration: underline; }
i { display: block; }
ul { list-style: none; }
svg { display: block; }

.desktop { position: relative; width: 1920px; height: 1080px; overflow: hidden; }
.wallpaper { position: absolute; left: 0; top: 0; width: 1920px; height: 1080px; }

/* desktop icons */
.icons { position: absolute; left: 0; top: 9px; width: 74px; display: flex; flex-direction: column; }
.dicon { height: 88px; display: flex; flex-direction: column; align-items: center; color: #fff; text-shadow: 1px 1px 2px #000, 0 0 2px #013; line-height: 14px; }
.dicon-img { width: 36px; height: 36px; margin-bottom: 4px; }
.dicon span { white-space: nowrap; }

/* top dock */
.topdock { position: absolute; left: 773px; top: 4px; width: 374px; height: 46px; padding: 3px 7px; display: flex; border-radius: 8px; border: 1px solid #a8d8f8; background: linear-gradient(#86c6f2, #4ea6ea 60%, #3f9de6); box-shadow: 0 1px 2px #0a5aa0; }
.td-i { width: 45px; height: 32px; border-right: 1px solid #d8eefc; margin-top: 3px; }
.td-last { border-right: 0; }

.watermark { position: absolute; right: 6px; top: 986px; text-align: right; color: #fff; opacity: .07; font-size: 14px; line-height: 18px; z-index: 2; white-space: nowrap; }

/* right hand dock */
.dock { position: absolute; left: 1565px; top: 752px; width: 353px; height: 285px; background: #23272b; border: 2px solid #0a0e13; border-radius: 8px; padding: 1px 8px 0 5px; }
.dock-inner { display: flex; flex-direction: column; height: 100%; }
.dock-band { height: 9px; flex: none; background: linear-gradient(90deg, #6b6f75 0 65%, #2c3034 65%); }
.dock-black { flex: none; height: 250px; background: #05080d; padding: 5.500px 0 0 8.500px; }
.dock-grid { display: grid; grid-template-columns: repeat(8, 40px); grid-auto-rows: 40.2px; }
.dock-grid svg { width: 32px; height: 32px; margin: 4px; }
.dock-tab { width: 185px; height: 8px; margin-left: 5px; background: #54585e; position: relative; }
.dock-tri { position: absolute; right: 17px; bottom: 1px; border: 4px solid transparent; border-top-color: #ddd; border-bottom: 0; }

/* main window */
.appwin { position: absolute; left: 198px; top: 87px; width: 1424px; height: 701px; display: flex; flex-direction: column; background: #fff; }
.titlebar { height: 30px; flex: none; display: flex; align-items: center; padding: 0 0 2px 7px; background: #fff; }
.app-ico { width: 18px; height: 18px; margin-right: 4px; }
.app-title { color: #929292; font-size: 12.500px; white-space: nowrap; }
.winctl { margin-left: auto; display: flex; padding-right: 18px; gap: 33px; }
.winctl svg { width: 12px; height: 12px; }
.menubar { height: 20px; flex: none; display: flex; padding: 0 0 1px 9px; align-items: center; background: #eef5fb; color: #666; font-size: 11.500px; }
.menubar span { width: 70px; white-space: nowrap; }
.menubar .m-wide { width: 72px; }
.toolbar { height: 48px; flex: none; display: flex; align-items: flex-start; padding: 5px 0 0 2px; background: linear-gradient(#edf3fa, #e0e8f2); border-bottom: 1px solid #c2cad6; }
.tool { width: 63px; height: 39px; display: flex; flex-direction: column; align-items: center; white-space: nowrap; }
.tool svg { width: 24px; height: 22px; }
.tool span { line-height: 14px; margin-top: -2px; font-size: 11.500px; }
.tool-off span { color: #888; }
.tool-sep { width: 1px; height: 38px; margin: 0 5px 0 6px; background: #c4ccd8; }
.tool-on { width: 73px; margin-left: 3px; border: 1px solid #9fb0c8; border-radius: 4px; background: linear-gradient(#e6edf6, #dde5f0); }
.work { flex: 1; min-height: 0; display: flex; border-top: 1px solid #9db7dc; }

.leftcol { width: 230px; flex: none; display: flex; background: #e6edfa; border-right: 2px solid #c6cfdd; padding: 8px 0 5px 6px; }
.panes { width: 188px; flex: none; display: flex; flex-direction: column; gap: 10px; overflow: hidden; }
.pane { flex: none; }
.pane-head { height: 28px; display: flex; }
.pane-head h3 { flex: 1; font-size: 12px; line-height: 27px; padding-left: 9px; letter-spacing: .3px; background: linear-gradient(#b2cdf6, #e4edfb); border: 1px solid #7aa2dc; border-bottom: 0; }
.pane-tog { width: 21px; height: 23px; margin-top: 2px; border: 1px solid #7aa2dc; border-left: 0; background: #eef4fc; display: flex; align-items: center; justify-content: center; }
.pane-tog svg { width: 12px; height: 12px; }
.pane-body { background: #fff; border: 1px solid #7aa2dc; padding-top: 4px; }
.pane-body li { height: 24.100px; display: flex; align-items: center; padding-left: 11px; font-size: 11.500px; white-space: nowrap; }
.pane-body svg { width: 18px; height: 18px; margin-right: 9px; flex: none; }
.tight { font-size: 11px; }
.b1 { height: 115px; }
.b2 { height: 358px; }
.b3 { height: 40px; }
.b3 p { padding: 8px 0 0 38px; font-size: 11.500px; white-space: nowrap; }
.pane:nth-child(2) .pane-head { height: 27px; }

.scroll { width: 16px; margin-left: 5px; flex: none; display: flex; flex-direction: column; background: #f0f0f0; padding-top: 3px; align-items: center; }
.scroll svg { width: 9px; height: 6px; flex: none; }
.thumb { width: 16px; height: 528px; background: #cdcdcd; margin: 5px 0 35px; flex: none; }

.rightcol { flex: 1; min-width: 0; display: flex; flex-direction: column; }
.listhead { height: 19px; flex: none; display: flex; background: #f7faff; border-bottom: 2px solid #7aa5e0; font-size: 11.500px; line-height: 17px; box-sizing: content-box; }
.listhead span { border-right: 1px solid #d5dde8; white-space: nowrap; padding-top: 2px; }
.c1 { width: 152px; padding-left: 4px; }
.c2 { width: 100px; padding-left: 8px; }
.c3, .c4, .c5, .c6, .c7 { text-align: right; padding-right: 4px; }
.c3 { width: 79px; }
.c4 { width: 79px; }
.c5 { width: 83px; }
.c6 { width: 59px; }
.c7 { width: 60px; }
.c8 { width: 61px; }
.list { height: 283px; flex: none; padding: 18px 0 0 5px; overflow: hidden; }
.list h4 { width: 668px; padding-left: 12px; font-family: "Liberation Serif", "Noto Sans CJK KR", serif; font-size: 12.500px; line-height: 18px; }
.h-2 { margin-top: 16px; }
.list hr { width: 280px; height: 1px; border: 0; margin: 4px 0 10px; background: linear-gradient(90deg, #3a72b8, #3a72b8 40%, #dfe8f4); }
.row { width: 668px; height: 18px; margin-bottom: 4px; display: flex; align-items: center; font-size: 10.500px; padding-left: 14px; color: #222; }
.row span:first-child { width: 136px; }
.row-sel { background: #a9a9a9; }
.split { height: 4px; flex: none; border-top: 1px solid #6f8fd2; border-bottom: 1px solid #6f8fd2; background: #f3f6fc; }
.disks { flex: 1; min-height: 0; padding: 5px 2px 0; display: flex; flex-direction: column; gap: 9px; }
.card { height: 66px; flex: none; display: flex; border: 1px solid #6f8fd2; border-radius: 8px; background: #cfdaf0; padding: 3px 5px 3px 0; overflow: hidden; }
.card-label { width: 85px; flex: none; padding: 6px 0 0 11px; font-size: 10.500px; line-height: 15px; color: #222; }
.dname { display: flex; align-items: center; margin: 0 0 1px -5px; font-family: "Liberation Serif", "Noto Sans CJK KR", serif; font-size: 12.500px; white-space: nowrap; }
.dname svg { width: 16px; height: 16px; margin-right: 5px; }
.part { height: 58px; flex: none; border: 2px solid #c4cdee; border-radius: 6px; background: #fff; padding: 2px 1px 0; font-size: 10.500px; overflow: hidden; }
.part b { display: block; padding-left: 7px; margin-top: 4px; font-size: 11px; line-height: 14px; font-family: "DejaVu Sans", sans-serif; }
.part p { padding-left: 7px; line-height: 15px; color: #222; }
.part-c { width: 119px; background: #94ee6a; border-color: #74d64c; }
.part-e { width: 617px; margin-left: 365px; }
.part-y { width: 494px; }
.part-i { width: 605px; margin-left: 2px; }
.bar { height: 15px; border-radius: 2px; position: relative; overflow: hidden; }
.bar i { position: absolute; left: 0; top: 0; bottom: 0; }
.bar-lg { background: linear-gradient(#8fd080, #d8f2cc); border: 1px solid #3c9a30; }
.bar-dg { background: linear-gradient(#45ad3c, #2a8c28); }
.bar-bl { background: linear-gradient(#a8a8dc, #c4c4ec); border: 1px solid #3f4198; }
.bar-bl i { width: 352px; background: #41439a; }
.bar-gr { background: linear-gradient(#8cd880, #c4ecb8); border: 1px solid #38a030; }
.bar-gr i { width: 224px; background: linear-gradient(#45ad3c, #2f962c); }
.status { height: 24px; flex: none; margin-top: auto; display: flex; align-items: center; padding: 0 0 1px 3px; background: #dfe6f2; border-top: 1px solid #7aa5e0; font-size: 11.500px; color: #333; }
.leg { display: flex; align-items: center; gap: 5px; white-space: nowrap; }
.l1, .l2 { width: 151px; }
.sw { width: 15px; height: 12px; border-radius: 2px; border: 1px solid; }
.sw-g { background: linear-gradient(90deg, #3ca83c 50%, #bcecb0 50%); border-color: #3a9a34; }
.sw-b { background: linear-gradient(90deg, #3e40a8 50%, #c4c4ee 50%); border-color: #3e40a8; }
.sw-n { background: #f4ece0; border-color: #b4a48c; }

/* progress window */
.progress { position: absolute; left: 637px; top: 253px; width: 547px; height: 374px; display: flex; flex-direction: column; border: 1px solid #a0a0a8; background: #d2d2d8; }
.pr-title { height: 24px; flex: none; background: #fff; color: #9a9a9a; font-size: 12px; line-height: 22px; padding-left: 3px; }
.pr-body { flex: 1; min-height: 0; display: flex; padding: 12px 5px 10px 6px; gap: 9px; }
.banner { width: 140px; height: 304px; flex: none; position: relative; overflow: hidden; border: 2px solid #8fa5d8; background: linear-gradient(100deg, #58b4ee 0, #4aa8ec 60%, #2a70e0 80%); }
.ban-bg { position: absolute; left: 0; top: 0; width: 100%; height: 100%; }
.ban-logo { position: absolute; left: 5px; top: 8px; width: 41px; height: 35px; }
.ban-text { position: absolute; left: 53px; top: 19px; color: #fff; font-size: 17px; line-height: 20px; font-family: "Liberation Sans", sans-serif; }
.pr-right { flex: 1; min-width: 0; display: flex; flex-direction: column; }
.log { height: 160px; flex: none; background: #fff; border: 1px solid #b8b8c0; border-right: 0; border-bottom: 0; padding: 0 0 0 2px; font-size: 11.500px; line-height: 15px; }
.log-h { padding-left: 5px; font-weight: 700; }
.log-k { padding-left: 48px; display: flex; }
.log-k span:first-child { width: 145px; }
.pct { text-align: right; font-size: 11.500px; line-height: 14px; padding-right: 1px; }
.pct-1 { margin-top: 4px; }
.pct-2 { margin-top: 10px; }
.pbar { height: 15px; flex: none; margin-top: 1px; background: #08b02c; }
.pbar-2 { margin-top: 3px; }
.btn-cancel { width: 71px; height: 19px; flex: none; margin: auto 0 0 auto; font: 11.500px Roboto, "Noto Sans CJK KR", sans-serif; color: #222; border: 1px solid #7c7c7c; border-radius: 3px; background: linear-gradient(#f4f4f4, #dcdcdc); }

/* message dialog */
.dialog { position: absolute; left: 669px; top: 331px; width: 482px; height: 218px; display: flex; flex-direction: column; background: #fff; border: 1px solid #1e90e0; border-top: 0; }
.dlg-title { height: 26px; flex: none; display: flex; align-items: center; justify-content: space-between; padding: 0 10px 2px 5px; background: #2b8bcb; color: #fff; font-size: 12px; }
.dlg-title svg { width: 11px; height: 11px; }
.dlg-body { height: 142px; flex: none; display: flex; gap: 9px; padding: 27px 0 0 26px; background: #fff; }
.dlg-ico { width: 30px; height: 30px; flex: none; }
.dlg-text { font-size: 12.250px; line-height: 15px; white-space: nowrap; color: #111; }
.kr { font-size: 13.200px; line-height: 13px; }
.wide { letter-spacing: .7px; }
.dlg-foot { flex: 1; background: #f0f0f0; display: flex; justify-content: flex-end; padding: 13px 21px 0 0; }
.btn-ok { width: 85px; height: 23px; font: 12px Roboto, "Noto Sans CJK KR", sans-serif; color: #111; background: #e1e1e1; border: 2px solid #0a6bbf; }

/* taskbar */
.taskbar { position: absolute; left: 0; top: 1040px; width: 1920px; height: 40px; display: flex; background: #03345f; color: #fff; }
.tb-left { display: flex; padding-left: 1px; }
.tb-i { width: 48.800px; height: 40px; display: flex; align-items: center; justify-content: center; }
.tb-i svg { width: 24px; height: 24px; }
.tb-i:first-child svg { width: 20px; height: 20px; }
.tb-run { border-bottom: 2px solid #b5dcf4; }
.tb-act { background: #19608f; border-bottom: 2px solid #b5dcf4; }
.tray { margin-left: auto; display: flex; align-items: center; height: 40px; }
.tray > span { text-align: center; flex: none; }
.t-ko { width: 22px; font-size: 11px; color: #d0d8e0; }
.t-han { width: 15px; height: 15px; margin: 0 3px 0 4px; background: #fff; color: #000; font-size: 13px; font-weight: 700; line-height: 15px; }
.t-a { width: 21px; font-size: 18px; line-height: 20px; }
.t-hj { width: 24px; font-size: 14px; }
.t-40 { width: 24px; font: 700 13px "Liberation Sans", sans-serif; border-bottom: 2px solid #fff; line-height: 13px; }
.t-ic { width: 20px; height: 20px; margin: 0 2px; flex: none; }
.clock { width: 76px; display: flex; flex-direction: column; align-items: center; font-size: 12px; line-height: 17px; white-space: nowrap; color: #e8eef4; }
.showdesk { width: 1px; height: 40px; margin: 0 4px 0 3px; background: #4c7797; }
```
